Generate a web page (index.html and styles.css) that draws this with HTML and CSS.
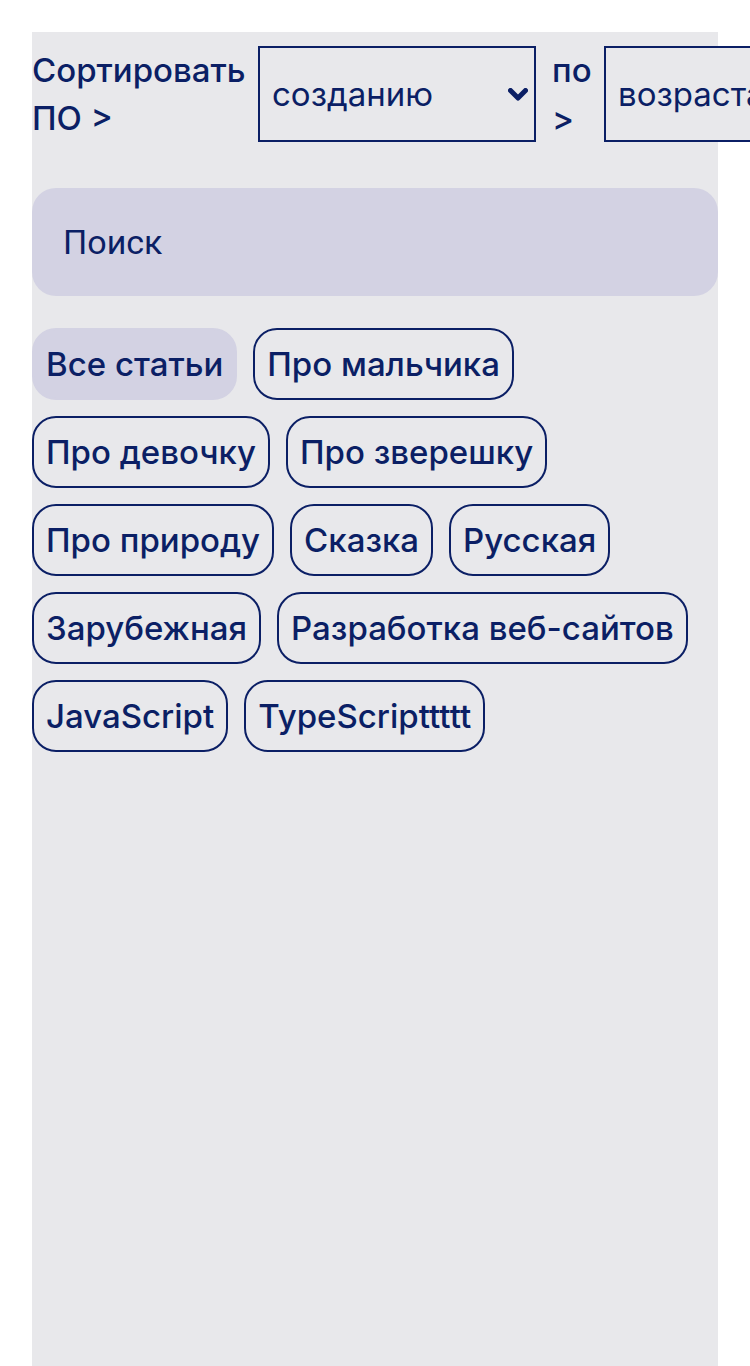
FILE: index.html
```html
<!DOCTYPE html>
<html lang="ru">
<head>
<meta charset="utf-8">
<title>Статьи</title>
<link rel="stylesheet" href="styles.css">
</head>
<body>
<div class="page">
<main class="panel">
  <div class="sort-row">
    <span class="sort-label sort-label--first">Сортировать ПО &gt;</span>
    <div class="select-wrap">
      <select class="sort-select">
        <option>созданию</option>
      </select>
      <svg class="chevron" viewBox="0 0 20 13" width="20" height="13" aria-hidden="true"><polyline points="2.5,2.5 10,10 17.5,2.5" fill="none" stroke="#0b1f65" stroke-width="5" stroke-linecap="round" stroke-linejoin="round"/></svg>
    </div>
    <span class="sort-label sort-label--second">по &gt;</span>
    <div class="select-wrap">
      <select class="sort-select">
        <option>возрастанию</option>
      </select>
    </div>
  </div>

  <input class="search" type="text" placeholder="Поиск">

  <div class="tags">
    <button class="chip chip--active">Все статьи</button>
    <button class="chip">Про мальчика</button>
    <button class="chip">Про девочку</button>
    <button class="chip">Про зверешку</button>
    <button class="chip">Про природу</button>
    <button class="chip">Сказка</button>
    <button class="chip">Русская</button>
    <button class="chip">Зарубежная</button>
    <button class="chip">Разработка веб-сайтов</button>
    <button class="chip">JavaScript</button>
    <button class="chip">TypeScripttttt</button>
  </div>
</main>
</div>
</body>
</html>
```
FILE: styles.css
```css
html, body {
  background: #ffffff;
}
body {
  margin: 0;
  font-family: "Inter", "Noto Sans", sans-serif;
  color: #0b1f65;
}
.page {
  padding: 32px 32px 0;
  overflow: hidden;
}
.panel {
  background: #e8e8eb;
  min-height: calc(100vh - 32px);
  padding-top: 14px;
  box-sizing: border-box;
}
.sort-row {
  display: flex;
  align-items: flex-start;
  gap: 16px;
  margin-right: -32px;
  overflow: hidden;
}
.sort-label {
  flex: none;
  font-size: 33px;
  font-weight: 500;
  line-height: 48px;
}
.sort-label--first {
  width: 210px;
}
.sort-label--second {
  width: 36px;
}
.select-wrap {
  position: relative;
  flex: none;
}
.sort-select {
  display: block;
  width: 278px;
  height: 96px;
  box-sizing: border-box;
  margin: 0;
  padding: 0 40px 0 12px;
  border: 2px solid #0b1f65;
  border-radius: 0;
  background: #e8e8eb;
  color: #0b1f65;
  font-family: "Inter", "Noto Sans", sans-serif;
  font-size: 33px;
  font-weight: 400;
  -webkit-appearance: none;
  appearance: none;
}
.chevron {
  position: absolute;
  right: 8px;
  top: 42px;
  pointer-events: none;
}
.search {
  display: block;
  box-sizing: border-box;
  width: 100%;
  height: 108px;
  margin: 46px 0 0;
  padding: 0 31px;
  border: none;
  border-radius: 24px;
  background: #d3d2e3;
  color: #0b1f65;
  font-family: "Roboto", "Liberation Sans", sans-serif;
  font-size: 34px;
  outline: none;
}
.search::placeholder {
  color: #0b1f65;
  opacity: 1;
}
.tags {
  display: flex;
  flex-wrap: wrap;
  gap: 16px;
  margin-top: 32px;
}
.chip {
  box-sizing: border-box;
  height: 72px;
  margin: 0;
  padding: 0 12px;
  border: 2px solid #0b1f65;
  border-radius: 24px;
  background: transparent;
  color: #0b1f65;
  font-family: "Inter", "Noto Sans", sans-serif;
  font-size: 33px;
  font-weight: 500;
  line-height: 68px;
  white-space: nowrap;
  cursor: pointer;
}
.chip--active {
  background: #d3d2e3;
  border-color: #d3d2e3;
}
```
